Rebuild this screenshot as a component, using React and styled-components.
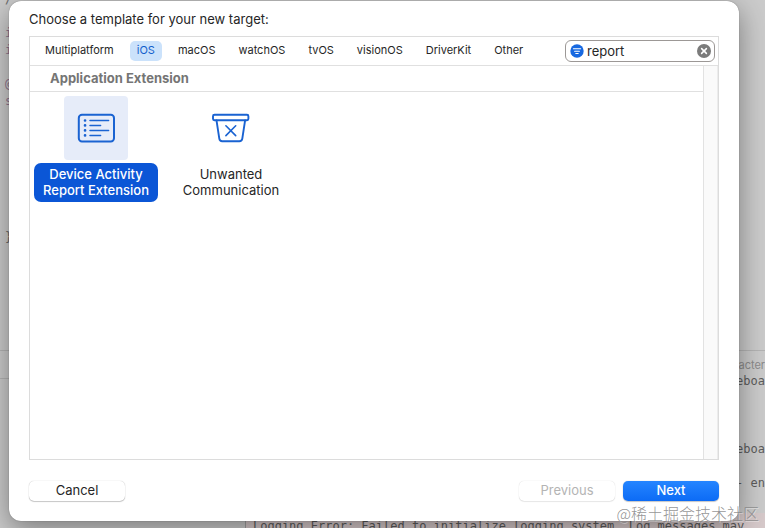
import React, { useState } from 'react';
import styled, { createGlobalStyle } from 'styled-components';

const platforms = ['Multiplatform', 'iOS', 'macOS', 'watchOS', 'tvOS', 'visionOS', 'DriverKit', 'Other'];

const sourceLines = ['/', '', 'i', 'i', '', '@', 's', '', '', '', '', '', '', '', '}'];

const consoleLines = ['eboa', '', '', '', 'eboa', '', '- en'];

const templates = [
  { id: 'report', lines: ['Device Activity', 'Report Extension'], Icon: ListIcon },
  { id: 'unwanted', lines: ['Unwanted', 'Communication'], Icon: BinIcon },
];

function ListIcon() {
  return (
    <svg width="64" height="64" viewBox="0 0 64 64" fill="none" stroke="#1a63d2" strokeLinecap="round">
      <rect x="14.8" y="18.8" width="35.2" height="26.6" rx="3.2" strokeWidth="2" />
      <path d="M26 24.5H44.6M26 29.4H36.6M26 34.4H44.6M26 39.4H36.6" strokeWidth="1.5" />
      <path d="M21 24.5h.1M21 29.4h.1M21 34.4h.1M21 39.4h.1" strokeWidth="2.6" />
    </svg>
  );
}

function BinIcon() {
  return (
    <svg width="64" height="64" viewBox="0 0 64 64" fill="none" stroke="#1a63d2" strokeWidth="1.9" strokeLinecap="round" strokeLinejoin="round">
      <rect x="14" y="18.8" width="35.4" height="5.4" rx="1.4" />
      <path d="M17.5 24.4L20.3 42.6Q20.7 45.2 23.2 45.2H40.4Q42.9 45.2 43.3 42.6L46.1 24.4" />
      <path d="M26.9 29.8L36.7 39.6M36.7 29.8L26.9 39.6" strokeWidth="1.6" />
    </svg>
  );
}

const FilterIcon = () => (
  <svg width="14" height="14" viewBox="0 0 14 14">
    <circle cx="7" cy="7" r="6.7" fill="#1768e0" />
    <path d="M3.4 4.8h7.2M4.6 7.2h4.8M5.8 9.5h2.4" stroke="#fff" strokeWidth="1.1" strokeLinecap="round" />
  </svg>
);

const ClearIcon = () => (
  <svg width="14" height="14" viewBox="0 0 14 14">
    <circle cx="7" cy="7" r="7" fill="#7b7b7b" />
    <path d="M4.6 4.6l4.8 4.8M9.4 4.6l-4.8 4.8" stroke="#fff" strokeWidth="1.5" strokeLinecap="round" />
  </svg>
);

const App = () => {
  const [platform, setPlatform] = useState('iOS');
  const [selected, setSelected] = useState('report');
  const [query, setQuery] = useState('report');

  return (
    <Screen>
      <GlobalStyle />
      <Workspace>
        <Source>
          {sourceLines.map((line, i) => (
            <CodeLine key={i} $keyword={line !== '}' && line !== '/'}>{line}</CodeLine>
          ))}
        </Source>
        <DebugArea>
          <Variables>
            <VariablesBar />
          </Variables>
          <Console>
            <ConsoleNote>acter</ConsoleNote>
            <ConsoleLog>
              {consoleLines.map((line, i) => (
                <ConsoleLine key={i}>{line}</ConsoleLine>
              ))}
            </ConsoleLog>
            <ErrorLine>Logging Error: Failed to initialize logging system. Log messages may</ErrorLine>
          </Console>
        </DebugArea>
      </Workspace>

      <Sheet role="dialog" aria-labelledby="sheet-title">
        <Title id="sheet-title">Choose a template for your new target:</Title>
        <Panel>
          <FilterBar>
            <Tabs>
              {platforms.map((name) => (
                <Tab key={name} type="button" $active={name === platform} onClick={() => setPlatform(name)}>
                  {name}
                </Tab>
              ))}
            </Tabs>
            <Search>
              <FilterIcon />
              <SearchInput
                type="text"
                aria-label="Filter"
                value={query}
                onChange={(e) => setQuery(e.target.value)}
              />
              <ClearButton type="button" aria-label="Clear" onClick={() => setQuery('')}>
                <ClearIcon />
              </ClearButton>
            </Search>
          </FilterBar>
          <Body>
            <List>
              <SectionTitle>Application Extension</SectionTitle>
              <Templates>
                {templates.map(({ id, lines, Icon }) => (
                  <Template key={id} type="button" onClick={() => setSelected(id)}>
                    <Tile $selected={id === selected}>
                      <Icon />
                    </Tile>
                    <Label $selected={id === selected}>
                      {lines[0]}
                      <br />
                      {lines[1]}
                    </Label>
                  </Template>
                ))}
              </Templates>
            </List>
            <ScrollTrack />
          </Body>
        </Panel>
        <Footer>
          <Button type="button">Cancel</Button>
          <Spacer />
          <Button type="button" disabled>Previous</Button>
          <Button type="button" $primary>Next</Button>
        </Footer>
      </Sheet>
      <Watermark>@稀土掘金技术社区</Watermark>
    </Screen>
  );
};

const GlobalStyle = createGlobalStyle`
  * {
    box-sizing: border-box;
  }

  body {
    margin: 0;
    font-family: Inter, "Liberation Sans", sans-serif;
    font-size: 13px;
    color: #262626;
  }

  button, input {
    font: inherit;
    color: inherit;
  }
`;

const Screen = styled.div`
  position: relative;
  display: flex;
  height: 100vh;
  padding: 1px 26px 7px 9px;
  background: #cbcbcb;
  overflow: hidden;
`;

const Workspace = styled.div`
  position: absolute;
  inset: 0;
  display: flex;
  flex-direction: column;
  justify-content: flex-end;
  font-family: "DejaVu Sans Mono", "Liberation Mono", monospace;
  font-size: 12px;
  line-height: 17px;
  color: #5c5c5c;
`;

const Source = styled.div`
  flex: none;
  height: 359px;
  padding-left: 5px;
`;

const CodeLine = styled.div`
  height: 17px;
  color: ${(props) => (props.$keyword ? '#8f7590' : '#6a6a6a')};
`;

const DebugArea = styled.div`
  flex: none;
  display: flex;
  height: 178px;
  border-top: 1px solid #b4b4b4;
`;

const Variables = styled.div`
  width: 245px;
`;

const VariablesBar = styled.div`
  height: 28px;
  border-bottom: 1px solid #b4b4b4;
`;

const Console = styled.div`
  flex: 1;
  min-width: 0;
  display: flex;
  flex-direction: column;
  padding-top: 6px;
  border-left: 1px solid #a0a0a0;
`;

const ConsoleNote = styled.div`
  height: 16px;
  font-family: Inter, "Liberation Sans", sans-serif;
  font-size: 11px;
  text-align: right;
  color: #8c8c8c;
`;

const ConsoleLog = styled.div`
  flex: 1;
  text-align: right;
`;

const ConsoleLine = styled.div`
  height: 17px;
`;

const ErrorLine = styled.div`
  height: 15px;
  padding: 5px 0 0 7px;
  background: #d6c9ca;
  white-space: nowrap;
  overflow: hidden;
`;

const Sheet = styled.div`
  position: relative;
  flex: 1;
  display: flex;
  flex-direction: column;
  padding: 9px 20px 20px;
  border-radius: 12px;
  background: #fff;
  box-shadow: 0 0 1px rgba(0, 0, 0, 0.5), 0 8px 28px rgba(0, 0, 0, 0.4);
`;

const Title = styled.div`
  height: 26px;
  line-height: 18px;
`;

const Panel = styled.div`
  flex: 1;
  display: flex;
  flex-direction: column;
  border: 1px solid #dcdcdc;
`;

const FilterBar = styled.div`
  display: flex;
  align-items: center;
  justify-content: space-between;
  height: 29px;
  padding: 0 3px 0 8px;
  border-bottom: 1px solid #e0e0e0;
`;

const Tabs = styled.div`
  display: flex;
  gap: 9px;
`;

const Tab = styled.button`
  height: 20px;
  padding: 0 7px 2px;
  border: none;
  border-radius: 5px;
  font-size: 11px;
  line-height: 18px;
  background: ${(props) => (props.$active ? '#cbe2fb' : 'transparent')};
  color: ${(props) => (props.$active ? '#1260cc' : '#262626')};
`;

const Search = styled.div`
  display: flex;
  align-items: center;
  width: 150px;
  height: 22px;
  padding: 0 3px 0 4px;
  border: 1px solid #9c9896;
  border-radius: 6px;
`;

const SearchInput = styled.input`
  flex: 1;
  min-width: 0;
  padding: 0 0 0 3px;
  border: none;
  outline: none;
  background: transparent;
`;

const ClearButton = styled.button`
  display: flex;
  padding: 0;
  border: none;
  background: none;
`;

const Body = styled.div`
  flex: 1;
  display: flex;
`;

const List = styled.div`
  flex: 1;
`;

const SectionTitle = styled.div`
  height: 26px;
  padding-left: 20px;
  border-bottom: 1px solid #e0e0e0;
  font-weight: 700;
  line-height: 25px;
  color: #757575;
`;

const Templates = styled.div`
  display: flex;
  gap: 11px;
  padding: 4px;
`;

const Template = styled.button`
  display: flex;
  flex-direction: column;
  align-items: center;
  gap: 3px;
  width: 124px;
  padding: 0;
  border: none;
  background: none;
`;

const Tile = styled.span`
  display: flex;
  border-radius: 4px;
  background: ${(props) => (props.$selected ? '#e6ecf9' : 'transparent')};
`;

const Label = styled.span`
  width: 100%;
  padding: 3px 0 4px;
  border-radius: 7px;
  line-height: 16px;
  font-weight: ${(props) => (props.$selected ? 500 : 400)};
  background: ${(props) => (props.$selected ? '#0b56d6' : 'transparent')};
  color: ${(props) => (props.$selected ? '#fff' : '#262626')};
`;

const ScrollTrack = styled.div`
  width: 15px;
  border-left: 1px solid #e2e2e2;
  border-right: 1px solid #ececec;
  background: #fafafa;
`;

const Footer = styled.div`
  display: flex;
  gap: 8px;
  margin-top: 21px;
`;

const Spacer = styled.div`
  flex: 1;
`;

const Button = styled.button`
  width: 96px;
  height: 20px;
  padding: 0 0 2px;
  border: none;
  border-radius: 5px;
  line-height: 18px;
  font-weight: ${(props) => (props.$primary ? 500 : 400)};
  background: ${(props) => (props.$primary ? 'linear-gradient(#2585ff, #0c6bf5)' : '#fff')};
  color: ${(props) => (props.$primary ? '#fff' : '#262626')};
  box-shadow: 0 0 1px rgba(0, 0, 0, 0.3), 0 1px 1px rgba(0, 0, 0, 0.2);

  &:disabled {
    color: #b4b4b4;
    box-shadow: 0 0 1px rgba(0, 0, 0, 0.2), 0 1px 1px rgba(0, 0, 0, 0.08);
  }
`;

const Watermark = styled.div`
  position: absolute;
  right: 6px;
  bottom: 3px;
  font-family: "Noto Sans CJK SC", sans-serif;
  font-size: 16px;
  font-weight: 300;
  line-height: 24px;
  color: rgba(130, 130, 130, 0.85);
  text-shadow: 1px 1px 0 rgba(255, 255, 255, 0.4);
`;

export default App;
